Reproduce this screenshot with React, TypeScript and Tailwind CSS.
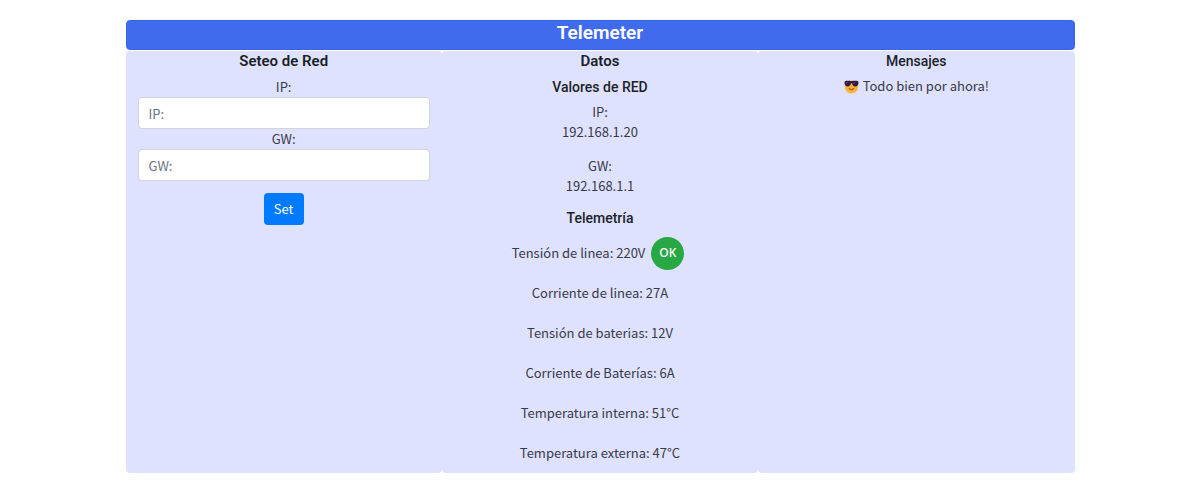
import type { ReactNode } from 'react';

const readings = [
  'Corriente de linea: 27A',
  'Tensión de baterias: 12V',
  'Corriente de Baterías: 6A',
  'Temperatura interna: 51°C',
  'Temperatura externa: 47°C',
];

function Panel({ children }: { children: ReactNode }) {
  return <section className="rounded bg-[#dfe2ff] px-3 text-center">{children}</section>;
}

function Heading({ children }: { children: ReactNode }) {
  return (
    <h2 className="mb-1.5 font-['Roboto',sans-serif] text-[15px] leading-5 font-semibold text-[#1b1f27]">
      {children}
    </h2>
  );
}

function Subheading({ children }: { children: ReactNode }) {
  return (
    <h3 className="mb-[5px] font-['Roboto',sans-serif] text-sm leading-5 font-medium text-[#1b1f27]">
      {children}
    </h3>
  );
}

function Field({ id, label }: { id: string; label: string }) {
  return (
    <div>
      <label htmlFor={id} className="block">
        {label}
      </label>
      <input
        id={id}
        type="text"
        placeholder={label}
        className="block h-8 w-full rounded border border-[#ced4da] bg-white px-2.5 placeholder:text-[#6c757d]"
      />
    </div>
  );
}

function CoolFace() {
  return (
    <svg viewBox="0 0 16 16" className="mr-1 size-[15px] shrink-0" aria-hidden="true">
      <circle cx="8" cy="8.500" r="7" fill="#fbb135" />
      <path d="M2.500 1.800h2.500c1.300 0 2 .4 3 .4s1.700-.4 3-.4h2.500c1.300 0 2 .9 2 2.200 0 2.400-1.400 3.900-3.500 3.900S8.900 6.500 8.500 4.500h-1C7.100 6.500 6.100 7.900 4 7.900S.5 6.400.5 4c0-1.300.7-2.200 2-2.200Z" fill="#321b41" />
      <path d="m2.300 5 1.700-2M10.300 5 12 3" stroke="#8a3f80" strokeWidth="1" />
      <path d="M5.500 10.500q2.500 2.200 5 0" fill="none" stroke="#703b2b" strokeWidth="1" strokeLinecap="round" />
    </svg>
  );
}

export default function App() {
  return (
    <main className="mx-auto max-w-[949px] py-5 font-['Noto_Sans_CJK_SC',sans-serif] text-[13px] leading-5 text-[#373a49]">
      <header className="rounded border border-[#3964e2] bg-[#3f6bec] pb-1 text-center">
        <h1 className="font-['Roboto',sans-serif] text-[19px] leading-6 font-semibold text-white">
          Telemeter
        </h1>
      </header>
      <div className="grid grid-cols-3 pt-px">
        <Panel>
          <Heading>Seteo de Red</Heading>
          <form onSubmit={(event) => event.preventDefault()}>
            <Field id="ip" label="IP:" />
            <Field id="gw" label="GW:" />
            <button type="submit" className="mt-3 h-8 rounded bg-[#007bff] px-2.5 text-white">
              Set
            </button>
          </form>
        </Panel>
        <Panel>
          <Heading>Datos</Heading>
          <Subheading>Valores de RED</Subheading>
          <dl className="mb-3">
            <dt>IP:</dt>
            <dd>192.168.1.20</dd>
            <dt className="mt-3.5">GW:</dt>
            <dd>192.168.1.1</dd>
          </dl>
          <Subheading>Telemetría</Subheading>
          <ul>
            <li className="flex h-10 items-center justify-center gap-1.5 pr-1">
              Tensión de linea: 220V
              <button type="button" className="size-[33px] rounded-full bg-[#28a745] font-['Noto_Sans',sans-serif] text-xs font-medium text-white">
                OK
              </button>
            </li>
            {readings.map((reading) => (
              <li key={reading} className="flex h-10 items-center justify-center">
                {reading}
              </li>
            ))}
          </ul>
        </Panel>
        <Panel>
          <Subheading>Mensajes</Subheading>
          <p className="flex items-center justify-center">
            <CoolFace />
            Todo bien por ahora!
          </p>
        </Panel>
      </div>
    </main>
  );
}
